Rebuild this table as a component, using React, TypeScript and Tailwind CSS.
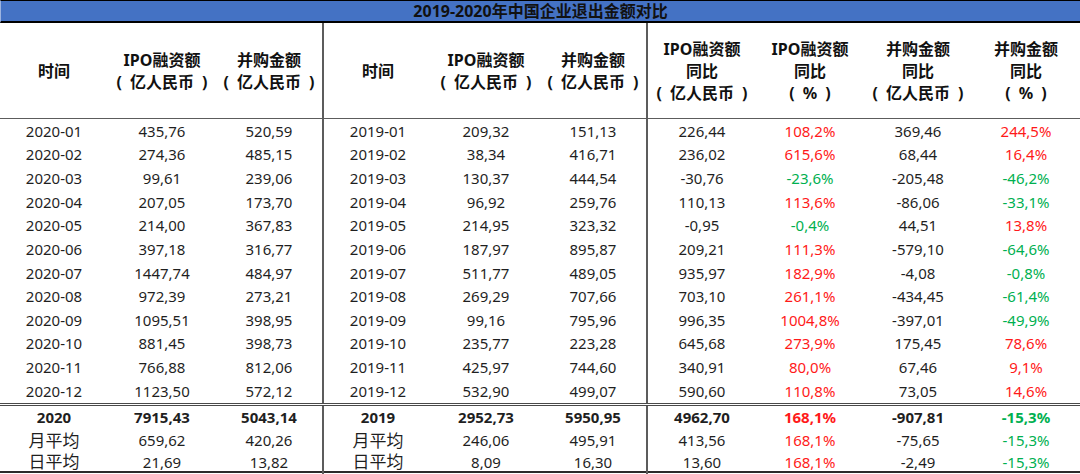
import React from "react";

type Row = string[];

const monthly: Row[] = [
  ["2020-01", "435,76", "520,59", "2019-01", "209,32", "151,13", "226,44", "108,2%", "369,46", "244,5%"],
  ["2020-02", "274,36", "485,15", "2019-02", "38,34", "416,71", "236,02", "615,6%", "68,44", "16,4%"],
  ["2020-03", "99,61", "239,06", "2019-03", "130,37", "444,54", "-30,76", "-23,6%", "-205,48", "-46,2%"],
  ["2020-04", "207,05", "173,70", "2019-04", "96,92", "259,76", "110,13", "113,6%", "-86,06", "-33,1%"],
  ["2020-05", "214,00", "367,83", "2019-05", "214,95", "323,32", "-0,95", "-0,4%", "44,51", "13,8%"],
  ["2020-06", "397,18", "316,77", "2019-06", "187,97", "895,87", "209,21", "111,3%", "-579,10", "-64,6%"],
  ["2020-07", "1447,74", "484,97", "2019-07", "511,77", "489,05", "935,97", "182,9%", "-4,08", "-0,8%"],
  ["2020-08", "972,39", "273,21", "2019-08", "269,29", "707,66", "703,10", "261,1%", "-434,45", "-61,4%"],
  ["2020-09", "1095,51", "398,95", "2019-09", "99,16", "795,96", "996,35", "1004,8%", "-397,01", "-49,9%"],
  ["2020-10", "881,45", "398,73", "2019-10", "235,77", "223,28", "645,68", "273,9%", "175,45", "78,6%"],
  ["2020-11", "766,88", "812,06", "2019-11", "425,97", "744,60", "340,91", "80,0%", "67,46", "9,1%"],
  ["2020-12", "1123,50", "572,12", "2019-12", "532,90", "499,07", "590,60", "110,8%", "73,05", "14,6%"],
];

const summary: Row[] = [
  ["2020", "7915,43", "5043,14", "2019", "2952,73", "5950,95", "4962,70", "168,1%", "-907,81", "-15,3%"],
  ["月平均", "659,62", "420,26", "月平均", "246,06", "495,91", "413,56", "168,1%", "-75,65", "-15,3%"],
  ["日平均", "21,69", "13,82", "日平均", "8,09", "16,30", "13,60", "168,1%", "-2,49", "-15,3%"],
];

const headers: string[][] = [
  ["时间"],
  ["IPO融资额", "（亿人民币）"],
  ["并购金额", "（亿人民币）"],
  ["时间"],
  ["IPO融资额", "（亿人民币）"],
  ["并购金额", "（亿人民币）"],
  ["IPO融资额", "同比", "（亿人民币）"],
  ["IPO融资额", "同比", "（%）"],
  ["并购金额", "同比", "（亿人民币）"],
  ["并购金额", "同比", "（%）"],
];

const divider = (i: number) =>
  i === 2 || i === 5 ? "border-r-2 border-[#5c5c5c]" : "";

const tone = (i: number, v: string) => {
  if (i !== 7 && i !== 9) return "text-[#1f1f1f]";
  return v.startsWith("-") ? "text-[#00b050]" : "text-[#ff1a1a]";
};

const isCjk = (v: string) => /[\u4e00-\u9fff]/.test(v);

// brackets in the sheet stand apart from the words they hold
const Line = ({ text }: { text: string }) => {
  if (!text.startsWith("（")) return <span>{text}</span>;
  const inner = text.slice(1, -1);
  return (
    <span className="flex items-center">
      <span className="pl-[3px] pr-[8px]">(</span>
      {inner}
      <span className="pl-[8px] pr-[3px]">)</span>
    </span>
  );
};

export default function App() {
  return (
    <div className="w-[1080px] h-[474px] bg-white font-['Noto_Sans','Noto_Sans_CJK_SC',sans-serif] overflow-hidden">
      {/* title bar */}
      <div className="h-[23px] border-t border-b-2 border-black border-l border-l-[#9db4e0] bg-[#4472c4] flex items-center justify-center">
        <span className="text-[16px] font-bold leading-none text-[#111]">
          2019-2020年中国企业退出金额对比
        </span>
      </div>

      {/* header */}
      <div className="grid grid-cols-[repeat(10,108px)] h-[96px] border-b border-[#5c5c5c]">
        {headers.map((lines, i) => (
          <div
            key={i}
            className={`flex flex-col items-center justify-center text-[16px] font-bold leading-[22px] text-[#111] ${divider(i)}`}
          >
            {lines.map((l) => (
              <Line key={l} text={l} />
            ))}
          </div>
        ))}
      </div>

      {/* monthly rows */}
      <div className="border-b-[3px] border-double border-[#4a4a4a]">
        {monthly.map((row, r) => (
          <div key={r} className="grid grid-cols-[repeat(10,108px)] h-[23.67px]">
            {row.map((v, i) => (
              <div
                key={i}
                className={`flex items-center justify-center text-[15px] ${tone(i, v)} ${divider(i)}`}
              >
                {v}
              </div>
            ))}
          </div>
        ))}
      </div>

      {/* totals and averages */}
      <div className="border-b-2 border-[#2b2b2b]">
        {summary.map((row, r) => (
          <div key={r} className="grid grid-cols-[repeat(10,108px)] h-[21.67px]">
            {row.map((v, i) => (
              <div
                key={i}
                className={`flex items-center justify-center ${
                  isCjk(v) ? "text-[17px]" : "text-[15px]"
                } ${r === 0 ? "font-bold" : ""} ${tone(i, v)} ${divider(i)}`}
              >
                {v}
              </div>
            ))}
          </div>
        ))}
      </div>
    </div>
  );
}
